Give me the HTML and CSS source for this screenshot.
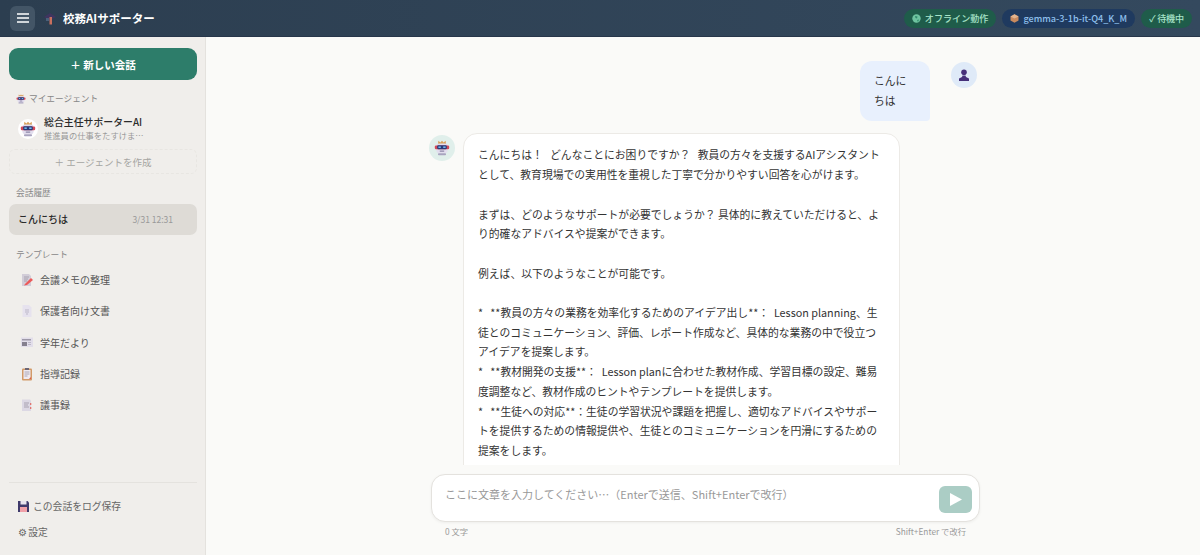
FILE: index.html
```html
<!DOCTYPE html>
<html lang="ja">
<head>
    <meta charset="utf-8">
    <title>校務AIサポーター</title>
    <link rel="stylesheet" href="styles.css">
</head>
<body>
    <svg class="defs" width="0" height="0">
        <symbol id="robot" viewBox="0 0 20 20">
            <path d="M5 5L5.500 1 8 3l2-2 2 2 2.500-2L15 5z" fill="#d9a05a"/>
            <rect x="3" y="4.500" width="14" height="12" rx="3" fill="#e2ddee"/>
            <rect x="1" y="7" width="18" height="4.500" rx="1.500" fill="#d24a5a"/>
            <rect x="4" y="6.500" width="12" height="5" rx="1.500" fill="#2b3a78"/>
            <rect x="5.500" y="8" width="3" height="2" fill="#6fb6ea"/>
            <rect x="11.500" y="8" width="3" height="2" fill="#6fb6ea"/>
            <rect x="7" y="13" width="6" height="1.800" rx=".9" fill="#8d88a8"/>
            <rect x="5" y="16.500" width="10" height="2.500" rx="1" fill="#a9a4c0"/>
        </symbol>
    </svg>

    <header class="topbar">
        <button class="menu-btn" aria-label="メニュー">
            <svg width="12" height="10" viewBox="0 0 12 10"><path d="M0 1h12M0 5h12M0 9h12" stroke="#fff" stroke-width="1.300"/></svg>
        </button>
        <svg class="logo" width="13" height="13" viewBox="0 0 13 13">
            <path d="M0 5l6-4 6 4-6 3z" fill="#3f3560"/>
            <path d="M2 6h3v3H2z" fill="#4a5f7a"/>
            <rect x="5.500" y="5" width="2.500" height="7.500" fill="#c9705e"/>
        </svg>
        <div class="app-title">校務AIサポーター</div>
        <div class="status-list">
            <span class="pill pill-green">
                <svg width="9" height="9" viewBox="0 0 9 9"><circle cx="4.500" cy="4.500" r="4.200" fill="#6fc3a0"/><path d="M3 2l2.500.5L5 4.500 3.500 4zM5 6l2-.5L6 8z" fill="#2f8a6a"/></svg>
                オフライン動作
            </span>
            <span class="pill pill-blue">
                <svg width="9" height="9" viewBox="0 0 9 9"><path d="M4.500.3L8.500 2.400v4.200L4.500 8.700.5 6.600V2.400z" fill="#c98a5e"/><path d="M.5 2.400l4 2.100 4-2.100-4-2.100z" fill="#e3b48e"/></svg>
                gemma-3-1b-it-Q4_K_M
            </span>
            <span class="pill pill-green pill-state">✓ 待機中</span>
        </div>
    </header>

    <div class="layout">
        <aside class="sidebar">
            <button class="new-chat">＋ 新しい会話</button>

            <div class="side-label agent-label">
                <svg class="icon-small"><use href="#robot"/></svg>
                マイエージェント
            </div>
            <div class="agent-item">
                <span class="agent-avatar"><svg width="16" height="16"><use href="#robot"/></svg></span>
                <div class="agent-text">
                    <div class="agent-name">総合主任サポーターAI</div>
                    <div class="agent-desc">推進員の仕事をたすけま…</div>
                </div>
            </div>
            <button class="agent-create">＋ エージェントを作成</button>

            <div class="side-label history-label">会話履歴</div>
            <div class="history-item">
                <span class="history-title">こんにちは</span>
                <span class="history-date">3/31 12:31</span>
            </div>

            <div class="side-label template-label">テンプレート</div>
            <ul class="template-list">
                <li>
                    <svg width="14" height="14" viewBox="0 0 14 14"><path d="M2 1h7l2 2v10H2z" fill="#d2cdd8"/><path d="M4 4h5M4 6h4M4 8h3" stroke="#a8a2b0"/><path d="M5 11l6-6 2 2-6 5-3 .5z" fill="#ec5a5a"/></svg>
                    会議メモの整理
                </li>
                <li>
                    <svg width="14" height="14" viewBox="0 0 14 14"><path d="M2.500 1h6.500l2.500 2.500V13h-9z" fill="#e6e2ee"/><path d="M5 6h4M5 8h4M6 10h2" stroke="#bcb7c8"/></svg>
                    保護者向け文書
                </li>
                <li>
                    <svg width="14" height="14" viewBox="0 0 14 14"><rect x="1" y="2.500" width="12" height="9.500" fill="#e2deea"/><rect x="2" y="4" width="9" height="1.500" fill="#9d98a8"/><rect x="2" y="7" width="5" height="4" fill="#85808e"/><path d="M8 7.500h3M8 9.500h3" stroke="#bcb7c8"/></svg>
                    学年だより
                </li>
                <li>
                    <svg width="14" height="14" viewBox="0 0 14 14"><rect x="2" y="1.500" width="10" height="12" rx="1" fill="#d29a68"/><rect x="3.500" y="3" width="7" height="9" fill="#efeaf0"/><rect x="5" y="1" width="4" height="2" fill="#6b6575"/><path d="M4.500 5h5M4.500 7h5M4.500 9h3" stroke="#9d98a8" stroke-width=".8"/><path d="M9 12l2-2v2z" fill="#e2574c"/></svg>
                    指導記録
                </li>
                <li>
                    <svg width="14" height="14" viewBox="0 0 14 14"><path d="M2 1.500h8l1 1v10.500H2z" fill="#dcd8e4"/><path d="M4 5h5M4 7h4M4 9h5" stroke="#a8a2b0"/><path d="M10 5l2 1-2 1zM10 9l2 1-2 1z" fill="#e2574c"/></svg>
                    議事録
                </li>
            </ul>

            <div class="side-footer">
                <div class="footer-link">
                    <svg width="11" height="11" viewBox="0 0 11 11"><path d="M0 0h9.500L11 1.500V11H0z" fill="#3f3a6b"/><rect x="2.500" y="0" width="6" height="3.500" fill="#e8e4ee"/><rect x="2" y="6" width="7" height="5" fill="#f0a0a8"/></svg>
                    この会話をログ保存
                </div>
                <div class="footer-link footer-settings">⚙ 設定</div>
            </div>
        </aside>

        <main class="main">
            <div class="messages">
                <div class="msg msg-user">
                    <div class="bubble bubble-user">こんにちは</div>
                    <span class="avatar avatar-user">
                        <svg width="12" height="12" viewBox="0 0 12 12"><circle cx="6" cy="3.300" r="2.800" fill="#46307a"/><path d="M4.500 6.500h3L8 8l3 1.500V12H1V9.500L4 8z" fill="#46307a"/></svg>
                    </span>
                </div>
                <div class="msg msg-bot">
                    <span class="avatar avatar-bot"><svg width="16" height="16"><use href="#robot"/></svg></span>
                    <div class="bubble bubble-bot">
                        <p>こんにちは！&nbsp;&nbsp; どんなことにお困りですか？&nbsp;&nbsp; 教員の方々を支援するAIアシスタントとして、教育現場での実用性を重視した丁寧で分かりやすい回答を心がけます。</p>
                        <p>まずは、どのようなサポートが必要でしょうか？ 具体的に教えていただけると、より的確なアドバイスや提案ができます。</p>
                        <p>例えば、以下のようなことが可能です。</p>
                        <p>*&nbsp;&nbsp; **教員の方々の業務を効率化するためのアイデア出し**：&nbsp; Lesson planning、生徒とのコミュニケーション、評価、レポート作成など、具体的な業務の中で役立つアイデアを提案します。<br>
                        *&nbsp;&nbsp; **教材開発の支援**：&nbsp; Lesson planに合わせた教材作成、学習目標の設定、難易度調整など、教材作成のヒントやテンプレートを提供します。<br>
                        *&nbsp;&nbsp; **生徒への対応**：生徒の学習状況や課題を把握し、適切なアドバイスやサポートを提供するための情報提供や、生徒とのコミュニケーションを円滑にするための提案をします。</p>
                    </div>
                </div>
            </div>
            <div class="composer">
                <div class="input-box">
                    <span class="placeholder">ここに文章を入力してください…（Enterで送信、Shift+Enterで改行）</span>
                    <button class="send-btn" aria-label="送信">
                        <svg width="12" height="13" viewBox="0 0 12 13"><path d="M0 0l12 6.500L0 13z" fill="#fff"/></svg>
                    </button>
                </div>
                <div class="input-meta">
                    <span>0 文字</span>
                    <span>Shift+Enter で改行</span>
                </div>
            </div>
        </main>
    </div>
</body>
</html>
```

FILE: styles.css
```css
html, body {
    margin: 0;
    padding: 0;
    height: 100%;
    overflow: hidden;
    font-family: "Noto Sans CJK JP", "Noto Sans", sans-serif;
    background-color: #fafaf8;
    color: #333;
}

body {
    display: flex;
    flex-direction: column;
}

.defs {
    position: absolute;
}

button {
    font-family: inherit;
    border: none;
    padding: 0;
}

/* top bar */
.topbar {
    height: 37px;
    flex-shrink: 0;
    box-sizing: border-box;
    display: flex;
    align-items: center;
    padding: 0 8px 0 10px;
    background: linear-gradient(90deg, #2c3e50, #34495e);
    border-bottom: 1px solid #27364a;
}

.menu-btn {
    width: 25px;
    height: 25px;
    border-radius: 6px;
    background-color: #435566;
    display: flex;
    align-items: center;
    justify-content: center;
    margin-right: 9px;
}

.logo {
    margin-right: 6px;
}

.app-title {
    color: #fff;
    font-size: 11.500px;
    font-weight: 700;
}

.status-list {
    margin-left: auto;
    display: flex;
    gap: 6px;
}

.pill {
    height: 19px;
    box-sizing: border-box;
    padding: 0 8px;
    border-radius: 10px;
    font-size: 9.100px;
    font-weight: 500;
    display: flex;
    align-items: center;
    gap: 4px;
}

.pill-green {
    background-color: #1f5c4a;
    color: #a7e3c8;
}

.pill-blue {
    background-color: #1f3a5f;
    color: #8fc0ee;
}

.pill-state {
    width: 51px;
    justify-content: center;
    padding: 0;
    letter-spacing: -0.2px;
}

/* sidebar */
.layout {
    flex: 1;
    display: flex;
    min-height: 0;
}

.sidebar {
    width: 206px;
    flex-shrink: 0;
    box-sizing: border-box;
    padding: 11px 8px 0 9px;
    background-color: #f0eeeb;
    border-right: 1px solid #e4e2de;
    display: flex;
    flex-direction: column;
}

.new-chat {
    height: 32px;
    flex-shrink: 0;
    border-radius: 9px;
    background-color: #2d7d6a;
    color: #fff;
    font-size: 10.500px;
    font-weight: 700;
}

.side-label {
    font-size: 8.700px;
    color: #888;
    padding-left: 7px;
    display: flex;
    align-items: center;
    gap: 3px;
}

.icon-small {
    width: 10px;
    height: 10px;
}

.agent-label {
    margin-top: 12px;
}

.agent-item {
    display: flex;
    align-items: center;
    gap: 6px;
    padding: 3px 9px;
    margin-top: 8px;
}

.agent-avatar {
    width: 20px;
    height: 20px;
    border-radius: 50%;
    background-color: #fff;
    display: flex;
    align-items: center;
    justify-content: center;
}

.agent-name {
    font-size: 9.900px;
    font-weight: 500;
    line-height: 13px;
    color: #2b2b2b;
}

.agent-desc {
    font-size: 8.300px;
    line-height: 12px;
    color: #999;
}

.agent-create {
    height: 25px;
    flex-shrink: 0;
    margin-top: 5px;
    box-sizing: border-box;
    background: none;
    border: 1px dashed #e8e6e2;
    border-radius: 6px;
    color: #a5a5a2;
    font-size: 9.500px;
}

.history-label {
    margin-top: 12px;
    padding-left: 7px;
}

.history-item {
    height: 31px;
    margin-top: 5px;
    box-sizing: border-box;
    padding: 0 24px 2px 9px;
    background-color: #dedbd6;
    border-radius: 7px;
    display: flex;
    align-items: center;
    justify-content: space-between;
}

.history-title {
    font-size: 10px;
    font-weight: 500;
    color: #2b2b2b;
}

.history-date {
    font-size: 8.500px;
    color: #999;
}

.template-label {
    margin-top: 13px;
}

.template-list {
    list-style: none;
    margin: 3px 0 0 0;
    padding: 0;
}

.template-list li {
    height: 31.300px;
    box-sizing: border-box;
    padding-left: 11px;
    display: flex;
    align-items: center;
    gap: 6px;
    font-size: 10px;
    color: #555;
}

.side-footer {
    margin-top: auto;
    height: 73px;
    box-sizing: border-box;
    border-top: 1px solid #e4e2de;
    padding: 10px 0 0 9px;
}

.footer-link {
    height: 26px;
    display: flex;
    align-items: center;
    gap: 4px;
    font-size: 9.800px;
    color: #666;
}

.footer-settings {
    word-spacing: -1px;
}

/* chat area */
.main {
    flex: 1;
    min-width: 0;
    display: flex;
    flex-direction: column;
    align-items: center;
}

.messages {
    flex: 1;
    min-height: 0;
    overflow: hidden;
    width: 548px;
    padding-top: 24px;
}

.msg {
    display: flex;
    align-items: flex-start;
    gap: 8px;
}

.msg-user {
    justify-content: flex-end;
    gap: 21px;
    margin-bottom: 12px;
}

.avatar {
    width: 26px;
    height: 26px;
    flex-shrink: 0;
    border-radius: 50%;
    display: flex;
    align-items: center;
    justify-content: center;
}

.avatar-user {
    background-color: #dfeaf8;
    margin-top: 1px;
}

.avatar-bot {
    background-color: #e0efeb;
    margin-top: 2px;
}

.bubble {
    box-sizing: border-box;
    font-size: 10.800px;
    line-height: 19.700px;
    color: #333;
}

.bubble-user {
    width: 70px;
    padding: 10px 14px 11px;
    background-color: #e8f0fd;
    border-radius: 12px 12px 4px 12px;
}

.bubble-bot {
    width: 437px;
    padding: 11px 15px 11px 14px;
    background-color: #fff;
    border: 1px solid #eceae6;
    border-radius: 14px;
}

.bubble-bot p {
    margin: 0 0 19.700px 0;
}

.composer {
    width: 549px;
    flex-shrink: 0;
    margin-left: 5px;
    padding-top: 9px;
    height: 90px;
    box-sizing: border-box;
}

.input-box {
    height: 48px;
    box-sizing: border-box;
    background-color: #fff;
    border: 1px solid #e4e2de;
    border-radius: 14px;
    box-shadow: 0 1px 3px rgba(0,0,0,0.05);
    display: flex;
    justify-content: space-between;
    padding: 11px 7px 0 13px;
}

.placeholder {
    font-size: 11px;
    line-height: 17px;
    color: #999;
}

.send-btn {
    width: 33px;
    height: 27px;
    border-radius: 6px;
    background-color: #abcdc5;
    display: flex;
    align-items: center;
    justify-content: center;
}

.input-meta {
    display: flex;
    justify-content: space-between;
    padding: 0 14px;
    margin-top: 3px;
    font-size: 8.300px;
    line-height: 13px;
    color: #999;
}
```
